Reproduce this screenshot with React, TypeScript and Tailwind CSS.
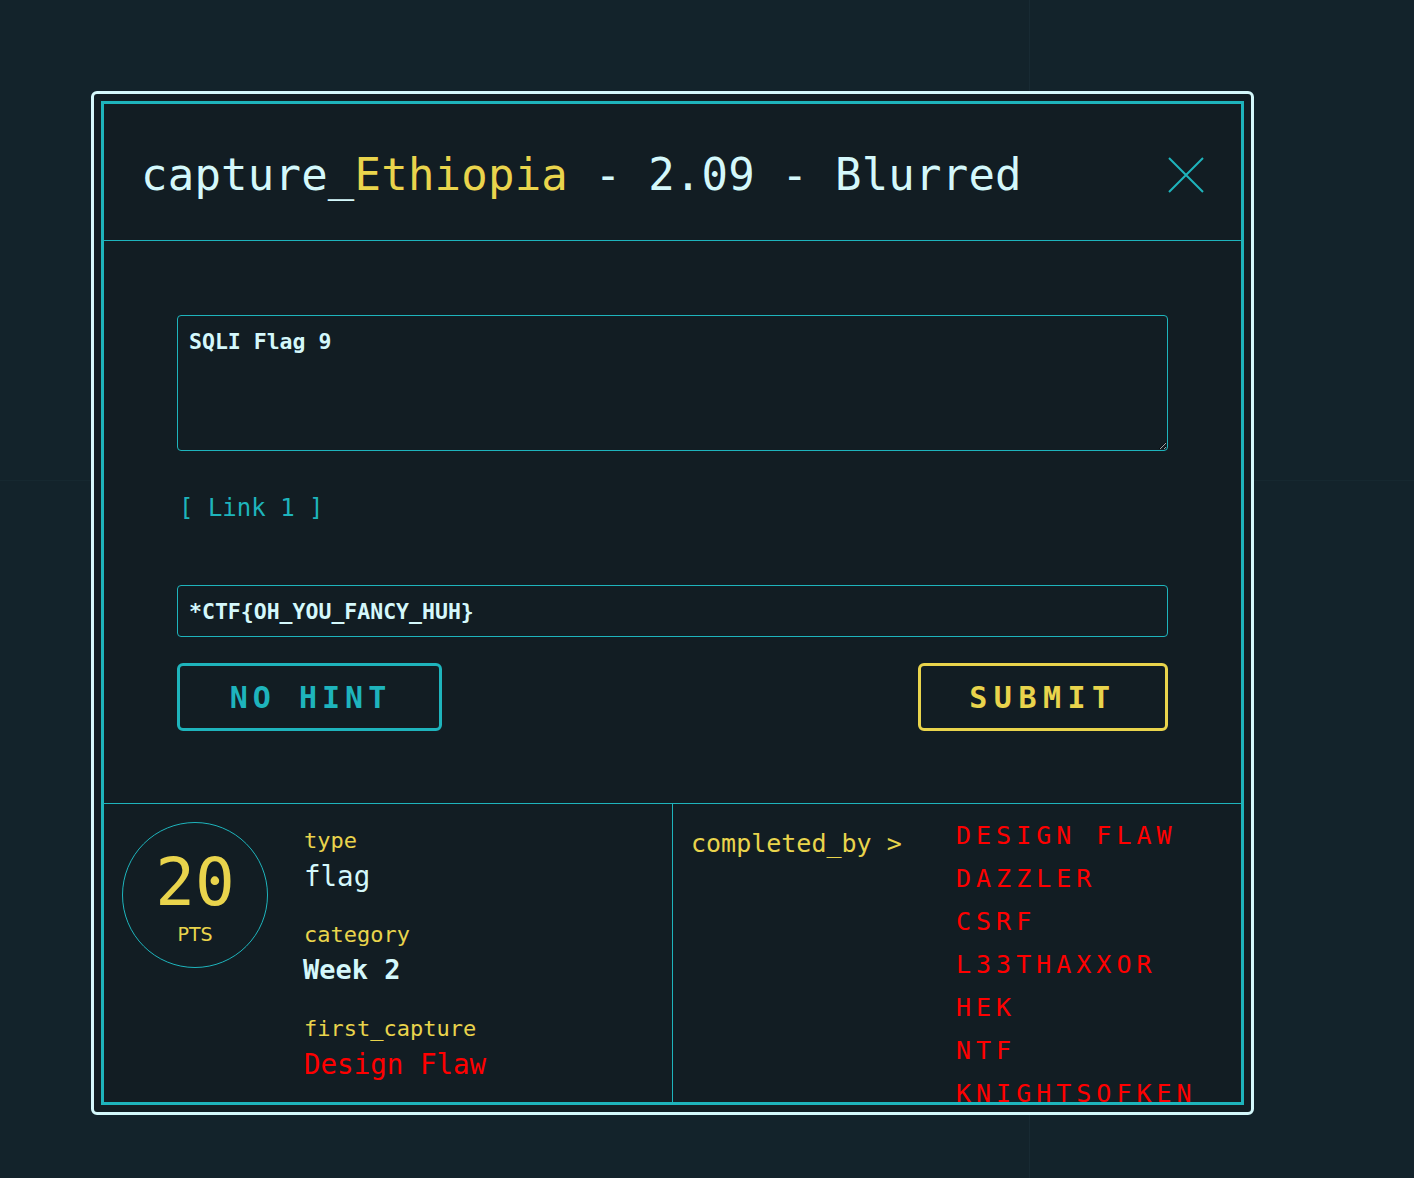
import React from "react";

const mono = { fontFamily: '"DejaVu Sans Mono", "Liberation Mono", monospace' };

const solvers = ["DESIGN FLAW", "DAZZLER", "CSRF", "L33THAXXOR", "HEK", "NTF", "KNIGHTSOFKEN"];

function CloseIcon() {
  return (
    <svg width="36" height="36" viewBox="0 0 36 36" className="shrink-0">
      <path d="M1 1 L35 35 M35 1 L1 35" stroke="#1eb4bc" strokeWidth="2" fill="none" />
    </svg>
  );
}

export default function App() {
  return (
    <div className="relative min-h-[1178px] w-full overflow-hidden bg-[#13232b]" style={mono}>
      {/* faint backdrop grid */}
      <div className="absolute left-[1029px] top-0 h-full w-px bg-[#182a33]" />
      <div className="absolute left-0 top-[480px] h-px w-full bg-[#162830]" />

      <div className="relative pl-[91px] pt-[91px]">
        <div className="w-[1163px] h-[1024px] rounded-[6px] border-[3px] border-[#d4f8fb] bg-[#121e24] p-[7px]">
          <div className="flex h-full flex-col overflow-hidden border-[3px] border-[#1eb4bc] bg-[#121d23]">
            {/* header */}
            <div className="flex h-[137px] shrink-0 items-center justify-between border-b border-[#1eb4bc] pl-[37px] pr-[37px] pt-[6px]">
              <h1 className="text-[44px] leading-none tracking-[0.2px] text-[#d4f8fb]">
                capture_<span className="text-[#e9d44c]">Ethiopia</span> - 2.09 - Blurred
              </h1>
              <CloseIcon />
            </div>

            {/* body */}
            <div className="flex h-[563px] shrink-0 flex-col border-b border-[#1eb4bc] px-[73px] pt-[74px]">
              <textarea
                defaultValue="SQLI Flag 9"
                className="h-[136px] w-full rounded-[4px] border border-[#1eb4bc] bg-transparent px-[11px] py-[12px] text-[21.5px] font-semibold leading-[28px] text-[#d4f8fb] outline-none"
                style={mono}
              />
              <div className="mt-[42px] h-[30px] pl-[2px] text-[24px] leading-[30px] text-[#1eb4bc]">
                [ Link 1 ]
              </div>
              <input
                readOnly
                value="*CTF{OH_YOU_FANCY_HUH}"
                className="mt-[62px] h-[52px] w-full rounded-[4px] border border-[#1eb4bc] bg-transparent px-[11px] text-[21.5px] font-semibold text-[#d4f8fb] outline-none"
                style={mono}
              />
              <div className="mt-[26px] flex items-center justify-between">
                <button className="h-[68px] w-[265px] rounded-[6px] border-[3px] border-[#1eb4bc] pl-[2px] text-[30px] font-bold tracking-[5px] text-[#1eb4bc]">
                  NO HINT
                </button>
                <button className="h-[68px] w-[250px] rounded-[6px] border-[3px] border-[#e9d44c] text-[30px] font-bold tracking-[6.5px] text-[#e9d44c]">
                  SUBMIT
                </button>
              </div>
            </div>

            {/* footer */}
            <div className="flex min-h-0 flex-1">
              <div className="flex w-[569px] shrink-0 border-r border-[#1eb4bc]">
                <div className="ml-[18px] mt-[18px] flex h-[146px] w-[146px] shrink-0 flex-col items-center justify-center rounded-full border border-[#1eb4bc]">
                  <div className="mt-[6px] text-[66px] leading-[60px] text-[#e9d44c]">20</div>
                  <div
                    className="mt-[12px] text-[19px] leading-none text-[#e9d44c]"
                    style={{ fontFamily: '"DejaVu Sans", sans-serif' }}
                  >
                    PTS
                  </div>
                </div>
                <div className="ml-[36px] flex flex-col gap-[24px] pt-[22px]">
                  <div>
                    <div className="text-[22px] leading-[30px] text-[#e9d44c]">type</div>
                    <div className="text-[27.5px] leading-[40px] text-[#d4f8fb]">flag</div>
                  </div>
                  <div>
                    <div className="text-[22px] leading-[30px] text-[#e9d44c]">category</div>
                    <div className="-ml-px text-[27px] font-semibold leading-[40px] text-[#d4f8fb]">Week 2</div>
                  </div>
                  <div>
                    <div className="text-[22px] leading-[30px] text-[#e9d44c]">first_capture</div>
                    <div className="text-[27.5px] leading-[40px] text-[#ff0000]">Design Flaw</div>
                  </div>
                </div>
              </div>
              <div className="flex flex-1 pl-[18px] pt-[10px]">
                <div className="mt-[14px] w-[265px] shrink-0 text-[25px] leading-[32px] text-[#e9d44c]">
                  completed_by &gt;
                </div>
                <div className="flex flex-col">
                  {solvers.map((s) => (
                    <div key={s} className="whitespace-nowrap text-[25px] leading-[43px] tracking-[5px] text-[#ff0000]">
                      {s}
                    </div>
                  ))}
                </div>
              </div>
            </div>
          </div>
        </div>
      </div>
    </div>
  );
}
